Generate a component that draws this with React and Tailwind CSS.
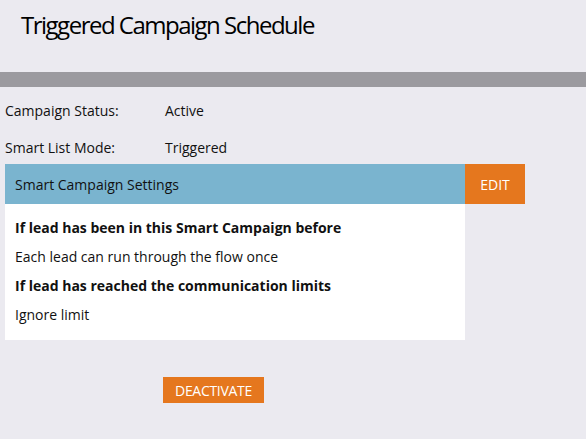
import React from "react";

const settings = [
  { text: "If lead has been in this Smart Campaign before", bold: true },
  { text: "Each lead can run through the flow once" },
  { text: "If lead has reached the communication limits", bold: true },
  { text: "Ignore limit" },
];

export default function App() {
  return (
    <div className="min-h-[439px] w-full bg-[#ebeaf0] font-['Open_Sans',sans-serif] text-[#111]">
      {/* Title */}
      <div className="h-[72px] pl-[21px] pt-[7px]">
        <h1 className="text-[24px] leading-[36px] tracking-[-1.5px] text-black">
          Triggered Campaign Schedule
        </h1>
      </div>
      <div className="h-[15px] bg-[#9b9a9f]" />

      {/* Status rows */}
      <div className="px-[5px] pt-[13px] text-[14px]">
        <div className="flex h-[20px] items-center">
          <span className="w-[160px]">Campaign Status:</span>
          <span>Active</span>
        </div>
        <div className="mt-[17px] flex h-[20px] items-center">
          <span className="w-[160px]">Smart List Mode:</span>
          <span>Triggered</span>
        </div>
      </div>

      {/* Smart Campaign Settings */}
      <div className="mt-[7px] flex pl-[5px]">
        <div className="w-[460px]">
          <div className="flex h-[40px] items-center bg-[#7ab4cf] pl-[10px] text-[14px] text-[#111]">
            Smart Campaign Settings
          </div>
          <div className="flex flex-col bg-white px-[10px] pt-[9px] pb-[11px] text-[14px]">
            {settings.map((s) => (
              <div
                key={s.text}
                className={`flex h-[29px] items-center ${s.bold ? "font-bold" : ""}`}
              >
                {s.text}
              </div>
            ))}
          </div>
        </div>
        <button className="flex h-[40px] w-[60px] items-center justify-center bg-[#e5771e] text-[14px] font-medium text-white">
          EDIT
        </button>
      </div>

      {/* Deactivate */}
      <div className="mt-[37px] pl-[163px]">
        <button className="flex h-[26px] w-[101px] items-center justify-center bg-[#e5771e] text-[14px] font-medium tracking-[-0.3px] text-white">
          DEACTIVATE
        </button>
      </div>
    </div>
  );
}
